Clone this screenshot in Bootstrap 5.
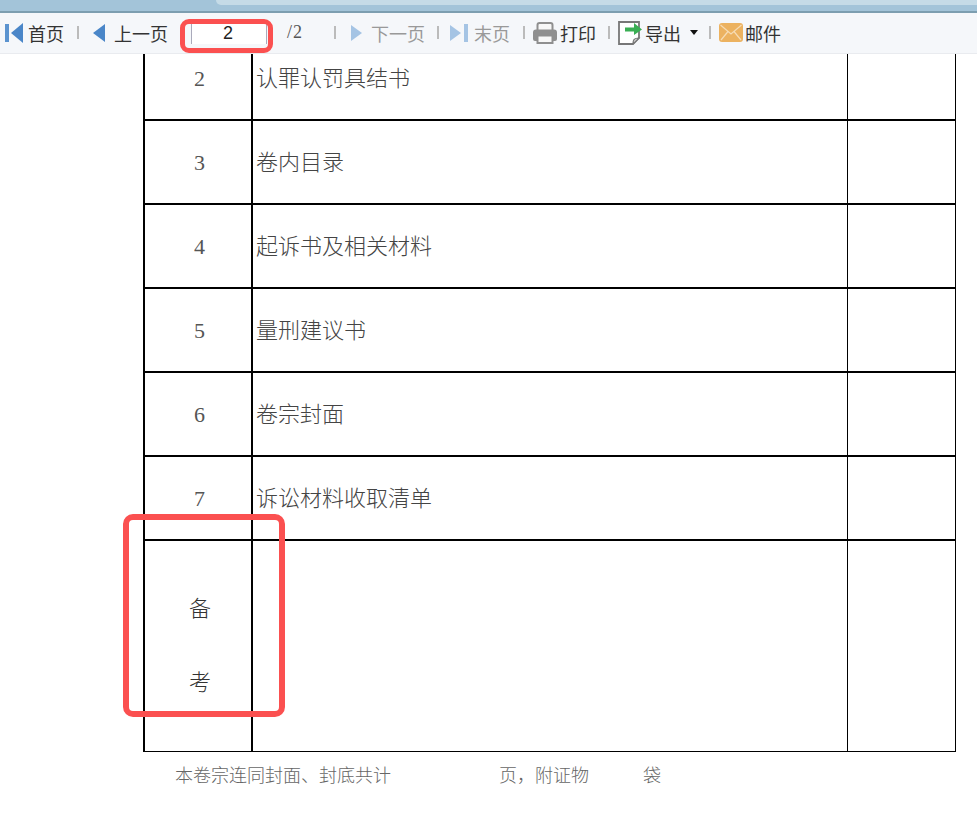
<!DOCTYPE html>
<html lang="zh">
<head>
<meta charset="utf-8">
<title>卷宗</title>
<link href="https://cdn.jsdelivr.net/npm/bootstrap@5.3.0/dist/css/bootstrap.min.css" rel="stylesheet">
<style>
html,body{height:820px;overflow:hidden;background:#fff}
body{position:relative;font-family:"Noto Sans CJK SC","Liberation Sans",sans-serif}
.top-strip{height:11px;background:#a3c4d9;padding-left:216px}
.top-tab{height:5px;background:#c5dbe7;border-bottom-left-radius:6px}
.strip-line{height:2px;background:#7d9eb0}
.tool-row{height:41px;background:#f5f7fa;border-bottom:1px solid #e9ebef;font-size:18px;color:#333;position:relative;z-index:2;padding-left:4px;padding-bottom:1px}
.tool-item{display:flex;align-items:center;white-space:nowrap;line-height:1}
.tool-item svg{display:block;flex:none}
.is-off{color:#999}
.tool-sep{width:2px;height:13px;background:#bbb;flex:none}
.page-input.form-control{width:76px;height:22px;padding:1px 2px 0 0;border:0;border-left:1px solid #aab;border-right:1px solid #aab;border-radius:0;text-align:center;font:18px "Liberation Sans",sans-serif;color:#222;background:#fff;box-shadow:none}
.page-total{width:17px;font:18px "Liberation Serif",serif;color:#555;letter-spacing:1px;flex:none}
.caret-mark{width:0;height:0;border-left:4px solid transparent;border-right:4px solid transparent;border-top:5px solid #111}
.doc-view{height:766px;overflow:hidden;padding-left:143px}
.doc-table.table{width:813px;table-layout:fixed;margin:-19px 0 0;border-collapse:collapse;font-size:22px;font-weight:300;color:#444;--bs-table-bg:#fff;--bs-table-color:#444}
.doc-table.table td{border:2px solid #000;padding:0 3px 4px;height:84px;vertical-align:middle;line-height:1.2}
.doc-table.table td.num-cell{text-align:center;font-family:"Liberation Serif",serif;padding:2px 0 0 3px;color:#555}
.doc-table.table td.mid-cell{border-right-width:1px}
.doc-table.table td.last-cell{border-left-width:1px;border-right-width:1px}
.doc-table.table tr.remark-row td{height:211px;border-bottom-width:1px}
.doc-table.table tr.remark-row td.remark-cell{padding:0 0 5px 4px}
.remark-word{line-height:74px;color:#333;text-align:center;font-size:22px}
.doc-foot{font-size:18px;font-weight:300;color:#666;line-height:24px;margin:10px 0 0 32px;white-space:nowrap}
.mark-box{position:absolute;border:5px solid #fb5050;z-index:5;pointer-events:none}
.mark-a{left:180px;top:19px;width:93px;height:34px;border-radius:9px}
.mark-b{left:123px;top:514px;width:162px;height:203px;border-width:6px;border-radius:10px}
</style>
</head>
<body>
<div class="top-strip"><div class="top-tab"></div></div>
<div class="strip-line"></div>
<div class="tool-row d-flex align-items-center">
  <div class="tool-item" style="gap:3px"><svg width="21" height="20" viewBox="0 0 21 20"><rect x="1" y="1" width="4" height="18" fill="#5b93cf"/><path d="M19 0V20L7 10Z" fill="#4a86c8"/></svg>首页</div>
  <span class="tool-sep" style="margin-left:13px"></span>
  <div class="tool-item" style="margin-left:14px;gap:9px"><svg width="12" height="20" viewBox="0 0 12 20"><path d="M12 1V19L0 10Z" fill="#4a86c8"/></svg>上一页</div>
  <input class="form-control page-input" style="margin-left:23px" value="2" aria-label="页码">
  <span class="page-total" style="margin-left:20px">/2</span>
  <span class="tool-sep" style="margin-left:30px"></span>
  <div class="tool-item is-off" style="margin-left:14px;gap:8px"><svg width="13" height="18" viewBox="0 0 13 18"><path d="M1 1V17L12 9Z" fill="#a5c4e4"/></svg>下一页</div>
  <span class="tool-sep" style="margin-left:12px"></span>
  <div class="tool-item is-off" style="margin-left:11px;gap:6px"><svg width="18" height="18" viewBox="0 0 18 18"><path d="M0 1V17L11 9Z" fill="#a5c4e4"/><rect x="14" y="0" width="4" height="18" fill="#a5c4e4"/></svg>末页</div>
  <span class="tool-sep" style="margin-left:13px"></span>
  <div class="tool-item" style="margin-left:8px;gap:3px"><svg width="24" height="22" viewBox="0 0 24 22"><rect x="4.5" y="1" width="15" height="12" rx="2" fill="#f7f7f7" stroke="#8f8f8f" stroke-width="2"/><path d="M3 7.500H21a3 3 0 0 1 3 3V17a2 2 0 0 1-2 2H2a2 2 0 0 1-2-2V10.500a3 3 0 0 1 3-3Z" fill="#8f8f8f"/><rect x="4.500" y="13.500" width="15" height="7.500" fill="#f7f7f7" stroke="#8f8f8f" stroke-width="2"/></svg>打印</div>
  <span class="tool-sep" style="margin-left:12px"></span>
  <div class="tool-item" style="margin-left:8px;gap:3px"><svg width="24" height="24" viewBox="0 0 24 24"><path d="M1 1H21V17L15 23H1Z" fill="#fff" stroke="#777" stroke-width="1.800"/><path d="M15 23C15 19 16 17 21 17Z" fill="#e4e4e4" stroke="#777" stroke-width="1.200"/><path d="M7 6.500H16V2L24 8.500L16 14V10.500H7Z" fill="#39ae53"/></svg>导出<span class="caret-mark" style="margin-left:6px"></span></div>
  <span class="tool-sep" style="margin-left:11px"></span>
  <div class="tool-item" style="margin-left:8px;gap:2px"><svg width="24" height="19" viewBox="0 0 24 19"><rect width="24" height="19" rx="3" fill="#ecb260"/><path d="M1.500 2L12 11L22.500 2M2 17L9 8.500M22 17L15 8.500" fill="none" stroke="#f6dcb5" stroke-width="1.200"/></svg>邮件</div>
</div>
<div class="doc-view">
  <table class="table doc-table">
    <colgroup><col style="width:108px"><col style="width:595px"><col style="width:108px"></colgroup>
    <tbody>
      <tr><td class="num-cell">2</td><td class="mid-cell">认罪认罚具结书</td><td class="last-cell"></td></tr>
      <tr><td class="num-cell">3</td><td class="mid-cell">卷内目录</td><td class="last-cell"></td></tr>
      <tr><td class="num-cell">4</td><td class="mid-cell">起诉书及相关材料</td><td class="last-cell"></td></tr>
      <tr><td class="num-cell">5</td><td class="mid-cell">量刑建议书</td><td class="last-cell"></td></tr>
      <tr><td class="num-cell">6</td><td class="mid-cell">卷宗封面</td><td class="last-cell"></td></tr>
      <tr><td class="num-cell">7</td><td class="mid-cell">诉讼材料收取清单</td><td class="last-cell"></td></tr>
      <tr class="remark-row"><td class="remark-cell"><div class="remark-word">备</div><div class="remark-word">考</div></td><td class="mid-cell"></td><td class="last-cell"></td></tr>
    </tbody>
  </table>
  <p class="doc-foot">本卷宗连同封面、封底共计<span class="d-inline-block" style="width:108px"></span>页，附证物<span class="d-inline-block" style="width:54px"></span>袋</p>
</div>
<div class="mark-box mark-a"></div>
<div class="mark-box mark-b"></div>
<script src="https://cdn.jsdelivr.net/npm/bootstrap@5.3.0/dist/js/bootstrap.bundle.min.js"></script>
</body>
</html>
